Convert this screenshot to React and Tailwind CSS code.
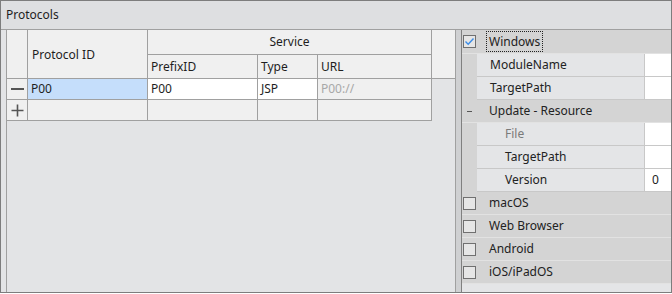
const font = { fontFamily: '"Noto Sans", "Open Sans", sans-serif' };

function Cell({ w, className = "", children }) {
  return (
    <div
      className={`flex shrink-0 items-center border-r border-b border-[#a0a0a0] px-[3px] ${w} ${className}`}
    >
      {children}
    </div>
  );
}

function Box({ checked }) {
  return (
    <div className="flex h-[13px] w-[13px] shrink-0 items-center justify-center border border-[#707070] bg-[#e6e6e6]">
      {checked && (
        <svg width="11" height="11" viewBox="0 0 11 11">
          <polyline points="1.5,5.5 4.2,8.2 9.5,2.5" fill="none" stroke="#3b8de8" strokeWidth="1.4" />
        </svg>
      )}
    </div>
  );
}

function CategoryRow({ label, checked, dash, first, focus }) {
  return (
    <div
      className={`flex shrink-0 items-center border-b border-[#e2e2e2] bg-[#d4d4d4] ${first ? "h-[24px]" : "h-[23px]"}`}
    >
      <div className="flex w-[15px] justify-center">
        {dash ? <span className="mt-[1px] h-px w-[5px] bg-[#555]" /> : <Box checked={checked} />}
      </div>
      <div className="ml-[10px]">
        <span
          className={`px-[2px] py-[1px] ${focus ? "outline outline-1 outline-dotted outline-[#222]" : ""}`}
        >
          {label}
        </span>
      </div>
    </div>
  );
}

function PropRow({ label, value, indent, muted }) {
  return (
    <div className="flex h-[23px] shrink-0">
      <div className="w-[15px] shrink-0 bg-[#d4d4d4]" />
      <div
        className={`flex w-[168px] shrink-0 items-center border-r border-b border-[#c8c8c8] bg-[#e4e5e7] ${indent ? "pl-[28px]" : "pl-[13px]"} ${muted ? "text-[#7a7a7a]" : ""}`}
      >
        {label}
      </div>
      <div className="flex flex-1 items-center border-b border-[#c8c8c8] bg-white pl-[7px]">
        {value}
      </div>
    </div>
  );
}

export default function App() {
  return (
    <div className="h-[294px] w-[672px] bg-white text-[12px] text-[#1e1e1e]" style={font}>
      <div className="flex h-[293px] flex-col border border-[#7d7d7d] bg-[#e3e4e6]">
        <div className="flex h-[29px] shrink-0 items-center border-b border-[#a0a0a0] bg-[#dedfe1] pl-[5px]">
          Protocols
        </div>
        <div className="flex flex-1 pl-[5px]">
          <div className="flex w-[450px] flex-col border-x border-[#a0a0a0]">
            <div className="flex h-[49px] bg-[#f0f0f0]">
              <Cell w="w-[21px]" />
              <Cell w="w-[120px]" className="pl-[4px] pt-[2px]">
                Protocol ID
              </Cell>
              <div className="flex w-[284px] shrink-0 flex-col">
                <div className="flex h-[25px] items-center justify-center border-r border-b border-[#a0a0a0]">
                  Service
                </div>
                <div className="flex flex-1">
                  <Cell w="w-[110px]">PrefixID</Cell>
                  <Cell w="w-[60px]">Type</Cell>
                  <Cell w="w-[114px]">URL</Cell>
                </div>
              </div>
              <div className="flex-1 border-b border-[#a0a0a0]" />
            </div>
            <div className="flex h-[21px]">
              <Cell w="w-[21px]" className="justify-center bg-[#f0f0f0]">
                <span className="h-[2px] w-[13px] bg-[#555]" />
              </Cell>
              <Cell w="w-[120px]" className="bg-[#c5defb]">
                P00
              </Cell>
              <Cell w="w-[110px]" className="bg-white">
                P00
              </Cell>
              <Cell w="w-[60px]" className="bg-white">
                JSP
              </Cell>
              <Cell w="w-[114px]" className="bg-[#f0f0f0] text-[#a8a8a8]">
                P00://
              </Cell>
            </div>
            <div className="flex h-[21px]">
              <Cell w="w-[21px]" className="justify-center bg-[#f0f0f0]">
                <svg width="13" height="13" viewBox="0 0 13 13">
                  <path d="M6.5 0.5v12M0.5 6.5h12" stroke="#555" strokeWidth="1.6" />
                </svg>
              </Cell>
              <Cell w="w-[120px]" className="bg-[#f0f0f0]" />
              <Cell w="w-[110px]" className="bg-[#f0f0f0]" />
              <Cell w="w-[60px]" className="bg-[#f0f0f0]" />
              <Cell w="w-[114px]" className="bg-[#f0f0f0]" />
            </div>
          </div>
          <div className="w-[5px] shrink-0 bg-[#cfd0d2]" />
          <div className="flex flex-1 flex-col border-l border-[#808080] bg-[#e4e5e7] text-[#222]">
            <CategoryRow label="Windows" checked first focus />
            <PropRow label="ModuleName" />
            <PropRow label="TargetPath" />
            <CategoryRow label="Update - Resource" dash />
            <PropRow label="File" indent muted />
            <PropRow label="TargetPath" indent />
            <PropRow label="Version" value="0" indent />
            <CategoryRow label="macOS" />
            <CategoryRow label="Web Browser" />
            <CategoryRow label="Android" />
            <CategoryRow label="iOS/iPadOS" />
          </div>
        </div>
      </div>
    </div>
  );
}
